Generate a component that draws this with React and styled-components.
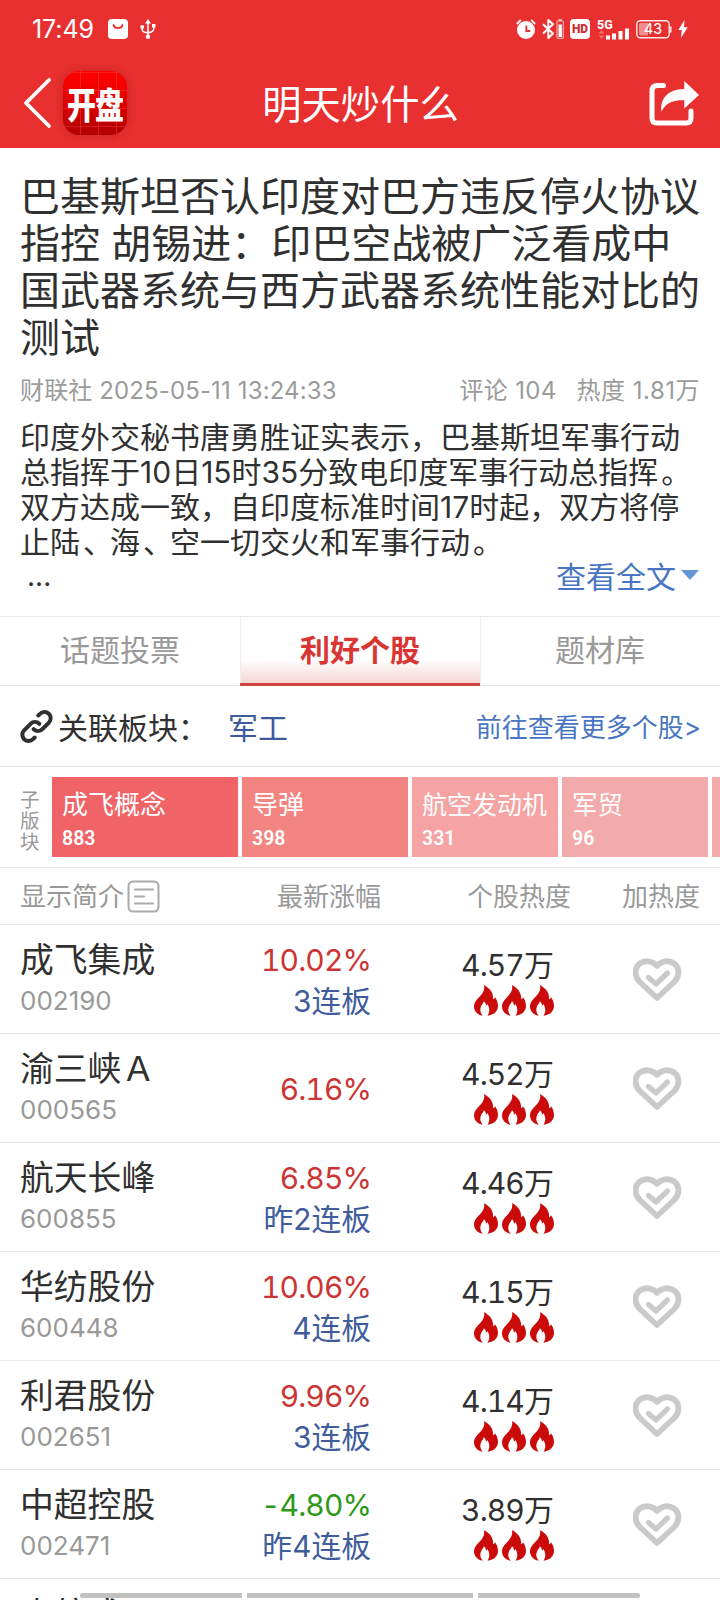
import React from "react";
import styled, { createGlobalStyle, css } from "styled-components";

const Global = createGlobalStyle`
  html, body { margin: 0; padding: 0; background: #fff; }
  body {
    width: 720px; height: 1600px; overflow: hidden;
    font-family: Inter, "Noto Sans CJK SC", sans-serif;
    color: #303030;
  }
  * { box-sizing: border-box; }
`;

const Screen = styled.div`
  position: relative;
  width: 720px;
  height: 1600px;
  overflow: hidden;
  background: #fff;
  white-space: nowrap;
`;

/* ---------- header ---------- */
const Header = styled.header`
  height: 148px;
  background: #e83030;
  color: #fff;
`;
const StatusBar = styled.div`
  height: 58px;
  padding: 0 32px 0 32px;
  display: flex;
  align-items: center;
  justify-content: space-between;
`;
const StatusGroup = styled.div`
  display: flex;
  align-items: center;
`;
const Clock = styled.span`
  font: 400 25px/28px Inter, sans-serif;
  letter-spacing: -0.1px;
  width: 76px;
`;
const NavBar = styled.div`
  height: 90px;
  padding: 0 20px 0 23px;
  display: grid;
  grid-template-columns: 188px 1fr 190px;
  align-items: center;
`;
const NavLeft = styled.div`
  display: flex;
  align-items: center;
  gap: 11px;
`;
const AppLogo = styled.div`
  width: 64px;
  height: 64px;
  border-radius: 16px;
  display: flex;
  align-items: center;
  justify-content: center;
  background:
    repeating-linear-gradient(90deg, transparent 0 17px, rgba(255, 120, 100, 0.28) 17px 18px),
    repeating-linear-gradient(0deg, transparent 0 8px, rgba(255, 120, 100, 0.24) 8px 9px, transparent 9px 18px),
    linear-gradient(#ff0000, #f00000 30%, #b00000);
  box-shadow: 0 0 8px rgba(120, 0, 0, 0.3);
`;
const LogoText = styled.span`
  font: 900 29px/56px "Noto Sans CJK SC", sans-serif;
  letter-spacing: -1px;
  transform: scaleY(1.25);
`;
const NavTitle = styled.h1`
  margin: 0;
  padding-top: 4px;
  text-align: center;
  font-size: 39.3px;
  font-weight: 400;
  line-height: 60px;
`;
const NavRight = styled.div`
  display: flex;
  justify-content: flex-end;
  padding-top: 1px;
`;

/* ---------- article ---------- */
const Article = styled.article`
  height: 468px;
  padding: 25px 20px 0;
`;
const Headline = styled.h2`
  margin: 0;
  font-size: 40px;
  font-weight: 400;
  line-height: 47px;
`;
const Line = styled.div``;
const Stop = styled.span`
  padding-left: 3px;
  margin-right: -3px;
`;
const Meta = styled.div`
  display: flex;
  align-items: center;
  height: 34px;
  margin-top: 12px;
  padding-top: 1px;
  font-size: 24px;
  line-height: 34px;
  color: #9b9b9b;
`;
const MetaItem = styled.span`
  margin-left: ${(p) => p.$left || 0};
  letter-spacing: ${(p) => p.$track || 0}px;
`;
const Body = styled.div`
  margin-top: 13px;
  font-size: 30px;
  line-height: 35px;
`;
const BodyEnd = styled.div`
  display: flex;
  justify-content: space-between;
  height: 34px;
  font-size: 30px;
  line-height: 32px;
  padding: 0 1px 0 7px;
`;
const Ellipsis = styled.span`
  font-size: 28px;
`;
const ReadAll = styled.span`
  display: flex;
  align-items: center;
  gap: 5px;
  color: #4876c2;
`;
const Caret = styled.i`
  border: 9.5px solid transparent;
  border-top: 10px solid #6596d6;
  border-bottom: 0;
  margin-bottom: 4px;
`;

/* ---------- tabs ---------- */
const Tabs = styled.nav`
  display: grid;
  grid-template-columns: repeat(3, 240px);
  height: 70px;
  border-top: 1px solid #e6e6e6;
`;
const Tab = styled.div`
  text-align: center;
  font-size: 30px;
  line-height: 66px;
  color: #999;
  border-bottom: 1px solid #e6e6e6;
  ${(p) =>
    p.$active &&
    css`
      font-weight: 700;
      color: #d93533;
      background: linear-gradient(#fff 64%, #f5d6d5);
      border-bottom: 3px solid #cf4743;
      box-shadow: inset 1px 0 #eee, 1px 0 #eee;
    `}
`;

/* ---------- related sector ---------- */
const Related = styled.div`
  height: 81px;
  padding: 0 19px 0 20px;
  display: flex;
  align-items: center;
  border-bottom: 1px solid #e6e6e6;
  font-size: 30px;
`;
const RelatedLabel = styled.span`
  margin-left: 5px;
  width: 170px;
`;
const SectorLink = styled.span`
  color: #3c5a9c;
`;
const MoreLink = styled.span`
  margin-left: auto;
  padding-bottom: 2px;
  font-size: 26px;
  color: #4876c2;
`;

/* ---------- sub-sector chips ---------- */
const ChipStrip = styled.div`
  height: 101px;
  padding: 10px 0 0 20px;
  display: flex;
  border-bottom: 1px solid #e6e6e6;
  overflow: hidden;
`;
const StripLabel = styled.div`
  flex: none;
  width: 32px;
  padding: 13px 12px 0 0;
  font-size: 19.5px;
  line-height: 20.8px;
  white-space: normal;
  color: #999;
`;
const Chip = styled.div`
  flex: none;
  width: ${(p) => p.$w}px;
  height: 80px;
  margin-right: 4px;
  padding: 10px 0 0 10px;
  color: #fff;
  background: ${(p) => p.$bg};
`;
const ChipName = styled.div`
  font-size: ${(p) => p.$size || 26}px;
  line-height: 36px;
`;
const ChipCount = styled.div`
  font-family: Roboto, sans-serif;
  font-size: 19.5px;
  font-weight: 600;
  line-height: 32px;
`;

/* ---------- table ---------- */
const columns = css`
  display: grid;
  grid-template-columns: 200px 151px 182px 1fr;
  padding: 0 20px 0 20px;
`;
const TableHead = styled.div`
  ${columns}
  grid-template-columns: 200px 161px 190px 1fr;
  height: 57px;
  align-items: center;
  border-bottom: 1px solid #e6e6e6;
  font-size: 26px;
  line-height: 56px;
  color: #999;
`;
const HeadCell = styled.div`
  display: flex;
  align-items: center;
  justify-content: ${(p) => p.$align || "flex-end"};
  gap: 3px;
`;
const HeadText = styled.span`
  line-height: 52px;
  padding-top: 2px;
`;
const Row = styled.div`
  ${columns}
  height: 109px;
  border-bottom: 1px solid #e6e6e6;
`;
const Cell = styled.div`
  display: flex;
  flex-direction: column;
  align-items: ${(p) => p.$align || "flex-end"};
  justify-content: ${(p) => p.$justify || "flex-start"};
  padding-top: ${(p) => p.$top || 0}px;
`;
const StockName = styled.div`
  font-size: 33.8px;
  line-height: 44px;
`;
const StockCode = styled.div`
  font-size: 26px;
  line-height: 38px;
  color: #999;
`;
const Change = styled.div`
  font-size: 30px;
  line-height: 44px;
  font-variant-numeric: tabular-nums;
  letter-spacing: -0.9px;
  color: ${(p) => (p.$down ? "#2c9a18" : "#cc3534")};
`;
const Streak = styled.div`
  font-size: 29.8px;
  line-height: 38px;
  color: #3f5c9c;
`;
const Heat = styled.div`
  font-size: 30px;
  line-height: 40px;
  font-variant-numeric: tabular-nums;
  letter-spacing: -0.9px;
`;
const Flames = styled.div`
  display: flex;
  gap: 4px;
  height: 32px;
  margin-right: -1px;
`;
const HeartCell = styled.div`
  display: flex;
  justify-content: flex-end;
  padding: 33px 18px 0 0;
`;

const HomeBar = styled.div`
  position: absolute;
  left: 80px;
  top: 1593px;
  width: 560px;
  height: 5px;
  display: grid;
  grid-template-columns: 162px 226px 162px;
  justify-content: space-between;
  border-radius: 3px;
  overflow: hidden;
`;
const BarPart = styled.i`
  background: #c1c1c1;
`;

/* ---------- drawings ---------- */
const Icon = styled.svg`
  display: block;
  flex: none;
  margin-left: ${(p) => p.$ml || 0}px;
`;

const BagIcon = () => (
  <Icon width="20" height="20" viewBox="0 0 20 20">
    <rect width="20" height="20" rx="4" fill="#fff" />
    <path d="M5.500 6a4.600 4 0 0 0 9 0" fill="none" stroke="#e83030" strokeWidth="1.800" strokeLinecap="round" />
  </Icon>
);
const UsbIcon = () => (
  <Icon $ml={12} width="16" height="20" viewBox="0 0 16 20" fill="none" stroke="#fff" strokeWidth="1.500">
    <path d="M8 3v14M2.200 8v2.500q0 3 5.800 3.300M13.800 7v2.500q0 3.500-5.800 4.300" />
    <path d="M8 0l3 4.500H5z" fill="#fff" stroke="none" />
    <circle cx="8" cy="17.700" r="2.200" fill="#fff" stroke="none" />
    <circle cx="2.200" cy="8" r="1.900" fill="#fff" stroke="none" />
    <path d="M12 5h3.500v3.500H12z" fill="#fff" stroke="none" />
  </Icon>
);
const AlarmIcon = () => (
  <Icon width="20" height="20" viewBox="0 0 20 20">
    <circle cx="10" cy="11" r="9" fill="#fff" />
    <path d="M.8 5L4.800 1M19.200 5l-4-4" stroke="#fff" strokeWidth="1.800" />
    <path d="M10.300 6.500v5.500h4" fill="none" stroke="#e83030" strokeWidth="1.800" />
  </Icon>
);
const BluetoothIcon = () => (
  <Icon $ml={6} width="22" height="20" viewBox="0 0 22 20" fill="none" stroke="#fff">
    <path d="M1 5.300L11 14.500 6.300 19V1L11 5.300 1 14.500" strokeWidth="2" strokeLinejoin="round" />
    <rect x="15" y="2" width="6.300" height="17.300" rx="1" strokeOpacity=".6" strokeWidth="1.200" />
    <path d="M16.500 0h3.500v2h-3.500z" fill="#fff" fillOpacity=".6" stroke="none" />
    <path d="M16.500 5.500h3.400v12.500h-3.400z" fill="#fff" stroke="none" />
  </Icon>
);
const HdBadge = styled.span`
  margin-left: 6px;
  width: 20px;
  height: 20px;
  border-radius: 4px;
  background: #fff;
  color: #d03030;
  font: 900 12px/20px Roboto, sans-serif;
  text-align: center;
`;
const Signal = styled.div`
  display: flex;
  align-items: center;
  margin-left: 7px;
`;
const SignalIcon = () => (
  <Signal>
    <Icon width="33" height="21" viewBox="0 0 33 21" fill="#fff" overflow="visible">
      <text x="0" y="9.500" fontFamily="Roboto" fontSize="12.500" fontWeight="800">5G</text>
      <path d="M9 16.500h4v4H9zM15 14.500h4v6h-4zM21.500 12h4v8.500h-4zM28 9.500h4v11h-4z" />
      <path d="M1.500 14.500L4.500 11l3 3.500zM1.500 16.500l3 3.500 3-3.500z" fillOpacity=".3" />
    </Icon>
  </Signal>
);
const BatteryIcon = () => (
  <Icon $ml={6} width="36" height="19" viewBox="0 0 36 19">
    <rect x=".8" y=".8" width="32.400" height="17" rx="3.500" fill="none" stroke="#fff" strokeOpacity=".9" strokeWidth="1.400" />
    <path d="M3 5q0-2 2-2h7v12.600H5q-2 0-2-2z" fill="#fff" fillOpacity=".45" />
    <path d="M34.200 6.500h1.300v6h-1.300z" fill="#fff" />
    <text x="17" y="14.400" fontFamily="Inter" fontSize="14" fontWeight="500" fill="#fff" textAnchor="middle">43</text>
  </Icon>
);
const BoltIcon = () => (
  <Icon $ml={6} width="10" height="18" viewBox="0 0 10 18">
    <path d="M6.500 0L.3 10h3.500L3 18 9.700 7.300H6z" fill="#fff" />
  </Icon>
);
const BackIcon = () => (
  <Icon width="29" height="52" viewBox="0 0 29 52">
    <path d="M26 3L3 26l23 23" fill="none" stroke="#fff" strokeWidth="3.800" strokeLinecap="round" strokeLinejoin="round" />
  </Icon>
);
const ShareIcon = () => (
  <Icon width="51" height="46" viewBox="0 0 51 46">
    <path d="M14.500 4.500H8.500q-5.500 0-5.500 5.500v27q0 5 5 5h29q5 0 5-5v-7" fill="none" stroke="#fff" strokeWidth="5" strokeLinecap="round" />
    <path d="M35.300 0L50 14 35.300 27.500v-8.300C25 19 17 21 12.500 30.500 11 17 19 8.500 35.300 8z" fill="#fff" />
  </Icon>
);
const LinkIcon = () => (
  <Icon width="33" height="33" viewBox="0 0 33 33" fill="none" stroke="#303030" strokeWidth="4" strokeLinecap="round">
    <path d="M18.300 5.500l1.700-1.600a6.200 6.200 0 0 1 8.900 8.700l-6.500 6.600a6.200 6.200 0 0 1-8.700 0" />
    <path d="M14.700 27.500l-1.700 1.600a6.200 6.200 0 0 1-8.900-8.700l6.500-6.600a6.200 6.200 0 0 1 8.700 0" />
  </Icon>
);
const NoteIcon = () => (
  <Icon width="33" height="33" viewBox="0 0 33 33" fill="none" stroke="#aaa" strokeWidth="2">
    <rect x="1.500" y="1.500" width="30" height="30" rx="4.500" />
    <path d="M8 9.500h18M8 16.500h9M8 23.500h18" strokeLinecap="round" />
  </Icon>
);
const Flame = () => (
  <Icon width="24" height="31" viewBox="0 0 24 31">
    <path
      d="M10 0c1 4.500-.8 8-5 12.200C1.500 15.700 0 18 0 21.300c0 4.800 3 8.200 8.600 9.500C6 27.500 5.600 24 7.300 20.800c1-1.800 2.200-3 2.600-4.600 1.600 1.100 2.100 2.600 2 4.600.8-.3 1.200-.9 1.400-1.700 2.500 3.600 2.800 7.900.2 11.700 6.500-.8 10.500-4.500 10.500-10 0-3.300-1.300-6.600-3-8.600-.3 1.100-.9 1.700-1.900 2C19.600 8.700 16.500 3.500 10 0z"
      fill="#cb0a0a"
    />
  </Icon>
);
const HeartCheck = () => (
  <Icon width="49" height="44" viewBox="0 0 49 44" fill="none" stroke="#cacaca" strokeLinecap="round" strokeLinejoin="round">
    <path d="M24 40L6.300 23.500C.5 17 2 9 6.800 5.500 12.500 1.700 19.500 3 24 7.800 28.500 3 35.500 1.700 41.200 5.500 46 9 47.500 17 41.700 23.500z" strokeWidth="5.800" />
    <path d="M15.500 19.500l7.500 6.500L34.500 15" strokeWidth="5.200" />
  </Icon>
);

const chips = [
  { name: "成飞概念", count: "883", w: 186, bg: "#f06467" },
  { name: "导弹", count: "398", w: 166, bg: "#f28482" },
  { name: "航空发动机", count: "331", w: 146, bg: "#f5a3a3", size: 25 },
  { name: "军贸", count: "96", w: 146, bg: "#f3aaab", size: 25.5 },
  { name: "", count: "", w: 146, bg: "#f3aaab" },
];

const stocks = [
  { name: "成飞集成", code: "002190", change: "10.02%", streak: "3连板", heat: "4.57万" },
  { name: "渝三峡Ａ", code: "000565", change: "6.16%", heat: "4.52万" },
  { name: "航天长峰", code: "600855", change: "6.85%", streak: "昨2连板", heat: "4.46万" },
  { name: "华纺股份", code: "600448", change: "10.06%", streak: "4连板", heat: "4.15万" },
  { name: "利君股份", code: "002651", change: "9.96%", streak: "3连板", heat: "4.14万" },
  { name: "中超控股", code: "002471", change: "-4.80%", streak: "昨4连板", heat: "3.89万" },
];

export default function App() {
  return (
    <Screen>
      <Global />
      <Header>
        <StatusBar>
          <StatusGroup>
            <Clock>17:49</Clock>
            <BagIcon />
            <UsbIcon />
          </StatusGroup>
          <StatusGroup>
            <AlarmIcon />
            <BluetoothIcon />
            <HdBadge>HD</HdBadge>
            <SignalIcon />
            <BatteryIcon />
            <BoltIcon />
          </StatusGroup>
        </StatusBar>
        <NavBar>
          <NavLeft>
            <BackIcon />
            <AppLogo>
              <LogoText>开盘</LogoText>
            </AppLogo>
          </NavLeft>
          <NavTitle>明天炒什么</NavTitle>
          <NavRight>
            <ShareIcon />
          </NavRight>
        </NavBar>
      </Header>

      <Article>
        <Headline>
          <Line>巴基斯坦否认印度对巴方违反停火协议</Line>
          <Line>指控 胡锡进：印巴空战被广泛看成中</Line>
          <Line>国武器系统与西方武器系统性能对比的</Line>
          <Line>测试</Line>
        </Headline>
        <Meta>
          <MetaItem $track={0.13}>财联社 2025-05-11 13:24:33</MetaItem>
          <MetaItem $left="auto" $track={0.3}>评论 104</MetaItem>
          <MetaItem $left="20px" $track={0.5}>热度 1.81万</MetaItem>
        </Meta>
        <Body>
          <Line>印度外交秘书唐勇胜证实表示，巴基斯坦军事行动</Line>
          <Line>总指挥于10日15时35分致电印度军事行动总指挥<Stop>。</Stop></Line>
          <Line>双方达成一致，自印度标准时间17时起，双方将停</Line>
          <Line>止陆<Stop>、</Stop>海<Stop>、</Stop>空一切交火和军事行动<Stop>。</Stop></Line>
        </Body>
        <BodyEnd>
          <Ellipsis>...</Ellipsis>
          <ReadAll>
            查看全文
            <Caret />
          </ReadAll>
        </BodyEnd>
      </Article>

      <Tabs>
        <Tab>话题投票</Tab>
        <Tab $active>利好个股</Tab>
        <Tab>题材库</Tab>
      </Tabs>

      <Related>
        <LinkIcon />
        <RelatedLabel>关联板块：</RelatedLabel>
        <SectorLink>军工</SectorLink>
        <MoreLink>前往查看更多个股&gt;</MoreLink>
      </Related>

      <ChipStrip>
        <StripLabel>子版块</StripLabel>
        {chips.map((c, i) => (
          <Chip key={i} $w={c.w} $bg={c.bg}>
            <ChipName $size={c.size}>{c.name}</ChipName>
            <ChipCount>{c.count}</ChipCount>
          </Chip>
        ))}
      </ChipStrip>

      <TableHead>
        <HeadCell $align="flex-start">
          <HeadText>显示简介</HeadText>
          <NoteIcon />
        </HeadCell>
        <HeadCell>
          <HeadText>最新涨幅</HeadText>
        </HeadCell>
        <HeadCell>
          <HeadText>个股热度</HeadText>
        </HeadCell>
        <HeadCell>
          <HeadText>加热度</HeadText>
        </HeadCell>
      </TableHead>

      {stocks.map((s) => (
        <Row key={s.code}>
          <Cell $align="flex-start" $top={13}>
            <StockName>{s.name}</StockName>
            <StockCode>{s.code}</StockCode>
          </Cell>
          <Cell $top={s.streak ? 13 : 2} $justify={s.streak ? "flex-start" : "center"}>
            <Change $down={s.change.startsWith("-")}>{s.change}</Change>
            {s.streak && <Streak>{s.streak}</Streak>}
          </Cell>
          <Cell $top={20}>
            <Heat>{s.heat}</Heat>
            <Flames>
              <Flame />
              <Flame />
              <Flame />
            </Flames>
          </Cell>
          <HeartCell>
            <HeartCheck />
          </HeartCell>
        </Row>
      ))}
      <Row>
        <Cell $align="flex-start" $top={14}>
          <StockName>中航成飞</StockName>
        </Cell>
      </Row>

      <HomeBar>
        <BarPart />
        <BarPart />
        <BarPart />
      </HomeBar>
    </Screen>
  );
}
